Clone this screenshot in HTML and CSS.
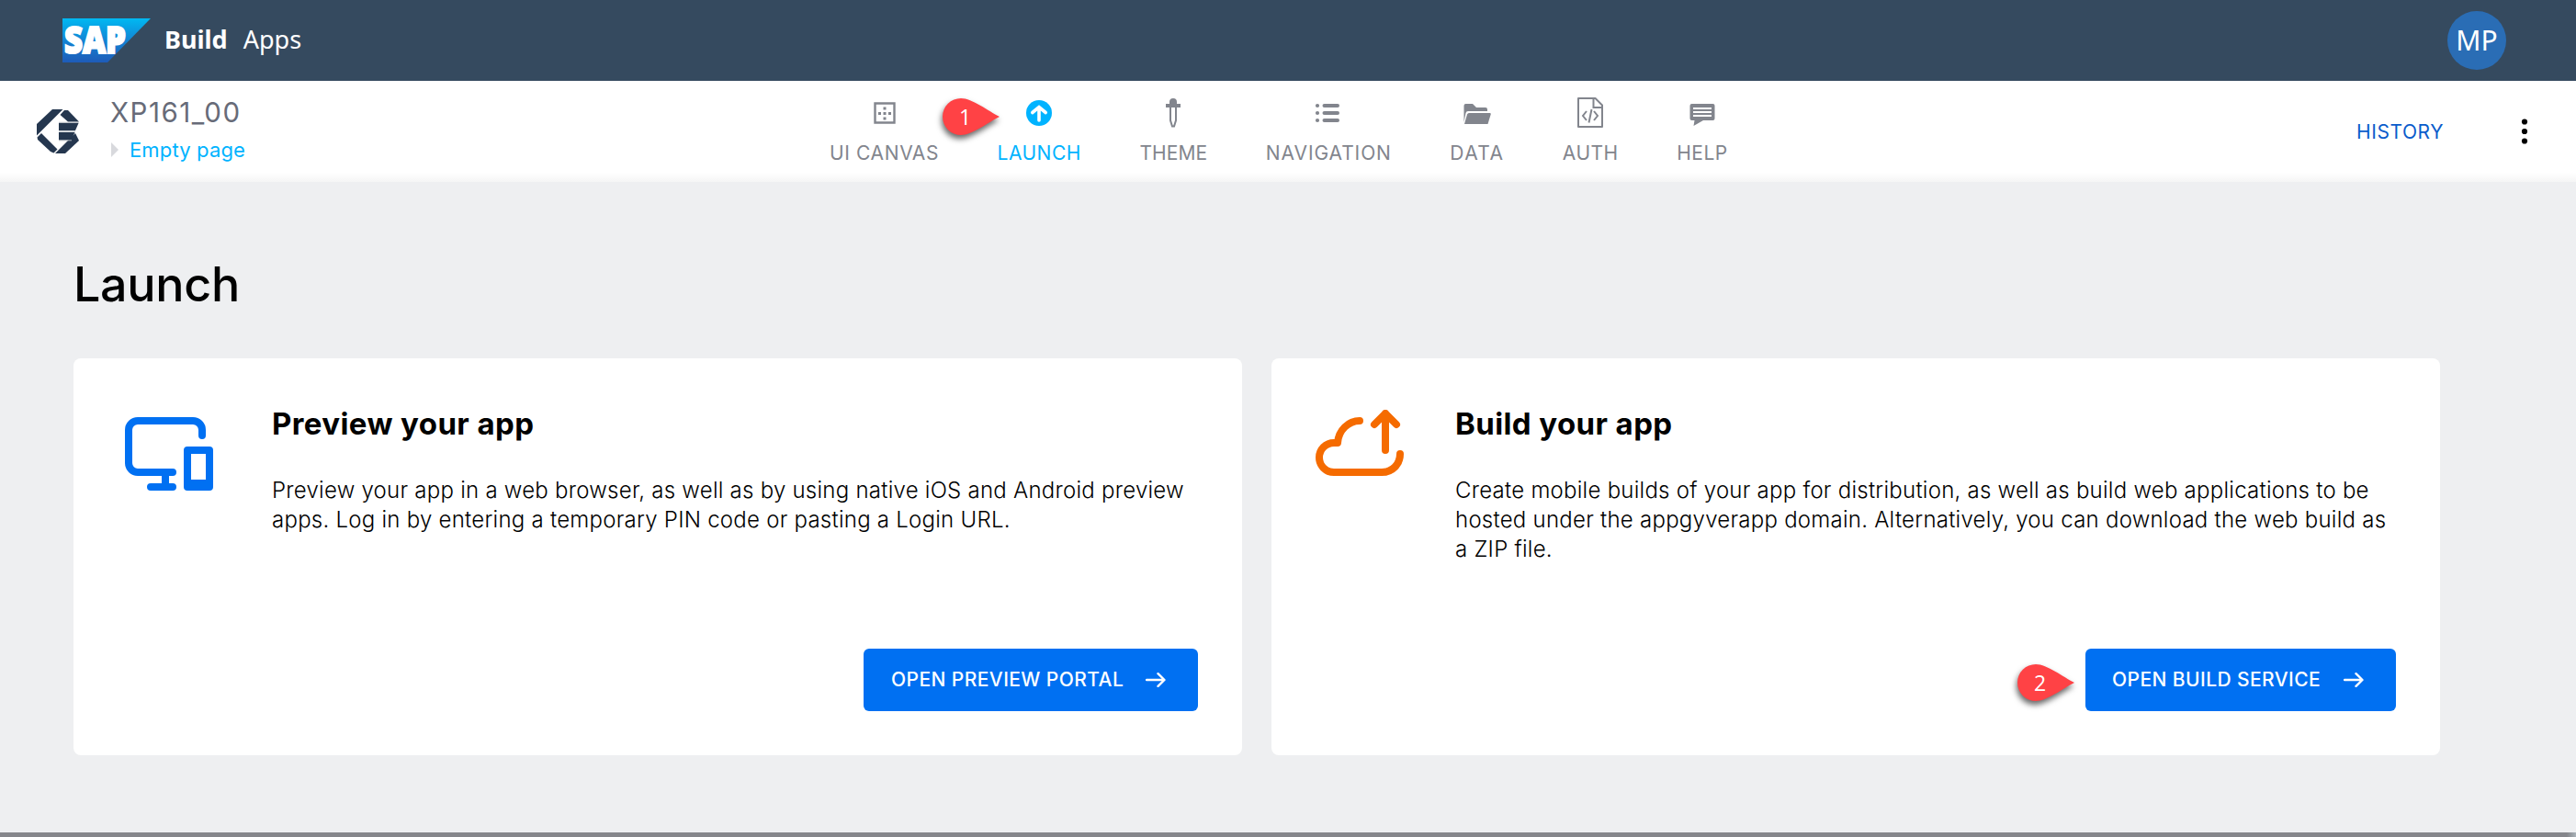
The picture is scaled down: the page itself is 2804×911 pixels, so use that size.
FILE: index.html
```
<!DOCTYPE html>
<html lang="en">
<head>
<meta charset="utf-8">
<title>SAP Build Apps</title>
<link rel="stylesheet" href="styles.css">
</head>
<body>
<header class="topbar">
  <svg class="sap-logo" width="96" height="48" viewBox="0 0 96 48">
    <defs><linearGradient id="sap" x1="0" y1="0" x2="0" y2="1"><stop offset="0" stop-color="#00b9f2"/><stop offset=".5" stop-color="#1384d4"/><stop offset="1" stop-color="#1e5bb8"/></linearGradient></defs>
    <path d="M0 0H96L49 48H0Z" fill="url(#sap)"/>
    <text class="sap-text" x="2" y="38" textLength="67" lengthAdjust="spacingAndGlyphs">SAP</text>
  </svg>
  <span class="brand">Build</span><span class="product">Apps</span>
  <span class="avatar">MP</span>
</header>
<div class="toolbar">
  <svg class="app-logo" width="46" height="48" viewBox="0 0 46 48" fill="#25374f">
    <path d="M17 0H28.5L0 28.500V16Z"/><path d="M30 1H34L46 13.500H34L25.500 6Z"/>
    <path d="M24 15H45.500L42 23H24Z"/><path d="M24 25H41.500L37.500 33.500H24Z"/>
    <path d="M0.500 30.500L5 26L22.500 43.500L18.500 47.500L15 46L1 33Z"/><path d="M20 48H31L46 34L42 26Z"/>
    <path d="M24 14.300H45.500M24 24H42M24 33.800H38" stroke="#aab1b9" stroke-width="1"/>
  </svg>
  <div class="titles">
    <div class="app-name">XP161_00</div>
    <div class="crumb"><svg width="8" height="16" viewBox="0 0 8 16"><path d="M0 0L8 8L0 16Z" fill="#d8d9dd"/></svg><span>Empty page</span></div>
  </div>
  <nav class="nav">
    <a class="tab"><svg width="36" height="36" viewBox="0 0 36 36"><path d="M7.500 7.500H28.500V28.500H7.500Z" fill="none" stroke="currentColor" stroke-width="2.400"/><path d="M11 17h3v3h-3zM16.500 17h3v3h-3zM22 17h3v3h-3zM16.500 11.500h3v3h-3zM16.500 22.500h3v3h-3z" fill="currentColor"/></svg><span>UI CANVAS</span></a>
    <a class="tab active"><svg width="36" height="36" viewBox="0 0 36 36"><circle cx="18" cy="18" r="14" fill="currentColor"/><path d="M18 26V12M10.800 17.500L18 11.500L25.200 17.500" fill="none" stroke="#fff" stroke-width="3.600" stroke-linecap="round"/></svg><span>LAUNCH</span></a>
    <a class="tab theme"><svg width="36" height="36" viewBox="0 0 36 36"><path d="M14 11V6a4 4 0 0 1 8 0V8H26V12H10V8H14Z" fill="currentColor"/><path d="M15 12V26L17 32.500H19L21 26V12" fill="none" stroke="currentColor" stroke-width="2"/></svg><span>THEME</span></a>
    <a class="tab navigation"><svg width="36" height="36" viewBox="0 0 36 36"><path d="M13.500 10H28M13.500 18H28M13.500 26H28" stroke="currentColor" stroke-width="4" stroke-linecap="round"/><g fill="currentColor"><circle cx="6" cy="10" r="2.100"/><circle cx="6" cy="18" r="2.100"/><circle cx="6" cy="26" r="2.100"/></g></svg><span>NAVIGATION</span></a>
    <a class="tab data"><svg width="36" height="36" viewBox="0 0 36 36" fill="currentColor"><path d="M3.500 28V10Q3.500 8 5.500 8H13L17 12H27Q29 12 29 14V16H8Q6 16 5.500 18Z"/><path d="M9 18H32Q33 18 32.700 19.500L29.500 30H4L7 19.500Q7.500 18 9 18Z"/></svg><span>DATA</span></a>
    <a class="tab"><svg width="36" height="36" viewBox="0 0 36 36" fill="none" stroke="currentColor" stroke-width="2"><path d="M5 2H23.500L31 9.500V33H5Z" stroke-linejoin="round"/><path d="M21.500 2V12H31"/><path d="M14 16L10 21L14 26M22 16L26 21L22 26M19.500 14L16.500 28.500"/></svg><span>AUTH</span></a>
    <a class="tab"><svg width="36" height="36" viewBox="0 0 36 36"><path d="M6.500 8H29.500Q31.500 8 31.500 10V24Q31.500 26 29.500 26H19L8.500 32L9.500 26H6.500Q4.500 26 4.500 24V10Q4.500 8 6.500 8Z" fill="currentColor"/><path d="M8 13H28M8 17H28M8 21H28" stroke="#fff" stroke-width="1.800"/></svg><span>HELP</span></a>
  </nav>
  <a class="history">HISTORY</a>
  <svg class="more" width="8" height="28" viewBox="0 0 8 28"><circle cx="4" cy="3.500" r="3.100"/><circle cx="4" cy="14" r="3.100"/><circle cx="4" cy="24.500" r="3.100"/></svg>
  <div class="marker marker-one"><svg width="70" height="54" viewBox="0 0 70 54"><path d="M62 20C50 14 32 0 20 0A20 20 0 0 0 20 40C32 40 50 26 62 20Z"/></svg><span>1</span></div>
</div>
<main class="main">
  <h1>Launch</h1>
  <div class="cards">
    <section class="card">
      <svg class="card-icon preview-icon" width="96" height="80" viewBox="0 0 96 80" fill="none" stroke="#0070f2" stroke-width="8" stroke-linecap="round"><path d="M84 20V14A10 10 0 0 0 74 4H14A10 10 0 0 0 4 14V50A10 10 0 0 0 14 60H52M44 60V76M28 76H52"/><path d="M68 36H92V76H68Z" stroke-linejoin="round"/><path d="M68 72H92"/></svg>
      <div class="card-body">
        <h2>Preview your app</h2>
        <p>Preview your app in a web browser, as well as by using native iOS and Android preview<br>apps. Log in by entering a temporary PIN code or pasting a Login URL.</p>
        <a class="button"><span>OPEN PREVIEW PORTAL</span><svg width="22" height="16" viewBox="0 0 22 16"><path d="M1 8H20M13.500 1.200L20.500 8L13.500 14.800"/></svg></a>
      </div>
    </section>
    <section class="card">
      <svg class="card-icon build-icon" width="96" height="72" viewBox="0 0 96 72" fill="none" stroke="#f56b00" stroke-width="8" stroke-linecap="round" stroke-linejoin="round"><path d="M48 12C36 12 25 22 24 36H20A16 16 0 0 0 20 68H72C84 68 92 59 92 48M76 44V4M64 16L76 4L88 16"/></svg>
      <div class="card-body">
        <h2>Build your app</h2>
        <p>Create mobile builds of your app for distribution, as well as build web applications to be<br>hosted under the appgyverapp domain. Alternatively, you can download the web build as<br>a ZIP file.</p>
        <a class="button build"><span>OPEN BUILD SERVICE</span><svg width="22" height="16" viewBox="0 0 22 16"><path d="M1 8H20M13.500 1.200L20.500 8L13.500 14.800"/></svg></a>
      </div>
      <div class="marker marker-two"><svg width="70" height="54" viewBox="0 0 70 54"><path d="M62 20C50 14 32 0 20 0A20 20 0 0 0 20 40C32 40 50 26 62 20Z"/></svg><span>2</span></div>
    </section>
  </div>
</main>
<footer class="edge"></footer>
</body>
</html>
```
FILE: styles.css
```
* { box-sizing: border-box; }
body { margin: 0; width: 2804px; height: 911px; overflow: hidden; display: flex; flex-direction: column; background: #eeeff1; font-family: Inter, "Open Sans", sans-serif; color: #000; }
.topbar { height: 88px; flex: none; display: flex; align-items: center; padding: 0 76px 0 68px; background: #354a5f; color: #fff; font: 27px/34px "Noto Sans", sans-serif; }
.sap-logo { margin-right: 15px; overflow: visible; }
.sap-text { font: 800 41px "Open Sans", sans-serif; fill: #fff; stroke: #fff; stroke-width: 2.2; }
.brand { font-weight: 700; margin-bottom: 2px; }
.product { margin: 0 0 2px 17px; }
.avatar { width: 64px; height: 64px; margin-left: auto; border-radius: 50%; background: #2a6db5; font-size: 30px; line-height: 63px; text-align: center; }
.toolbar { position: relative; height: 110px; flex: none; display: flex; padding-left: 40px; background: linear-gradient(#fff 100px, #f5f5f5 110px); }
.app-logo { margin-top: 31px; }
.titles { width: 817px; padding: 16px 0 0 34px; }
.app-name { font-size: 29.5px; line-height: 36px; letter-spacing: 1.5px; color: #676b78; }
.crumb { display: flex; align-items: center; gap: 12px; margin-top: 9px; padding-left: 1px; font-size: 22px; line-height: 28px; letter-spacing: .15px; color: #00b3ff; }
.nav { display: flex; gap: 63.5px; padding-top: 17px; color: #82858d; font-size: 21px; line-height: 26px; letter-spacing: .5px; }
.tab { display: flex; flex-direction: column; align-items: center; gap: 13px; white-space: nowrap; }
.tab:first-child { letter-spacing: .62px; }
.theme { letter-spacing: .12px; }
.navigation { letter-spacing: .9px; }
.data { letter-spacing: 1.4px; }
.active { color: #00b3ff; }
.history { margin: 43px 84px 0 auto; font-size: 21px; line-height: 26px; letter-spacing: .57px; color: #0a5ccb; }
.more { margin: 41px 52px 0 0; }
.marker { position: absolute; color: #fff; font: 23px/40px "Open Sans", sans-serif; }
.marker svg { display: block; fill: #ff4245; overflow: visible; filter: drop-shadow(-1px 4px 3px rgba(0, 0, 0, .6)); }
.marker span { position: absolute; left: 18px; top: 0; }
.marker-one { left: 1026px; top: 19px; }
.marker-two { right: 390px; bottom: 45px; }
.main { flex: 1; padding: 80px 148px 0 80px; }
h1 { margin: 0 0 48px; font-size: 52px; line-height: 64px; font-weight: 500; letter-spacing: -.3px; }
.cards { display: grid; grid-template-columns: 1272px 1272px; gap: 32px; }
.card { position: relative; height: 432px; display: flex; padding: 0 48px 48px 56px; border-radius: 8px; background: #fff; }
.card-icon { flex: none; }
.preview-icon { margin: 64px 64px 0 0; }
.build-icon { margin: 56px 56px 0 -8px; }
.card-body { flex: 1; display: flex; flex-direction: column; padding-top: 51px; }
h2 { margin: 0 0 37px; font-size: 33px; line-height: 40px; font-weight: 700; letter-spacing: .4px; }
p { margin: 0; font-size: 24px; line-height: 32px; white-space: nowrap; font-weight: 300; letter-spacing: .25px; }
.button { width: 364px; height: 68px; margin: auto 0 0 auto; padding: 0 35px 0 30px; display: flex; align-items: center; justify-content: space-between; border-radius: 6px; background: #0070f2; color: #fff; font-size: 21px; line-height: 26px; font-weight: 500; letter-spacing: .42px; white-space: nowrap; }
.build { width: 338px; padding-left: 29px; }
.button svg { fill: none; stroke: #fff; stroke-width: 2.400; stroke-linecap: round; stroke-linejoin: round; }
.edge { height: 5px; flex: none; background: linear-gradient(90deg, #85868b 2794px, #a9b2b8); }
```
